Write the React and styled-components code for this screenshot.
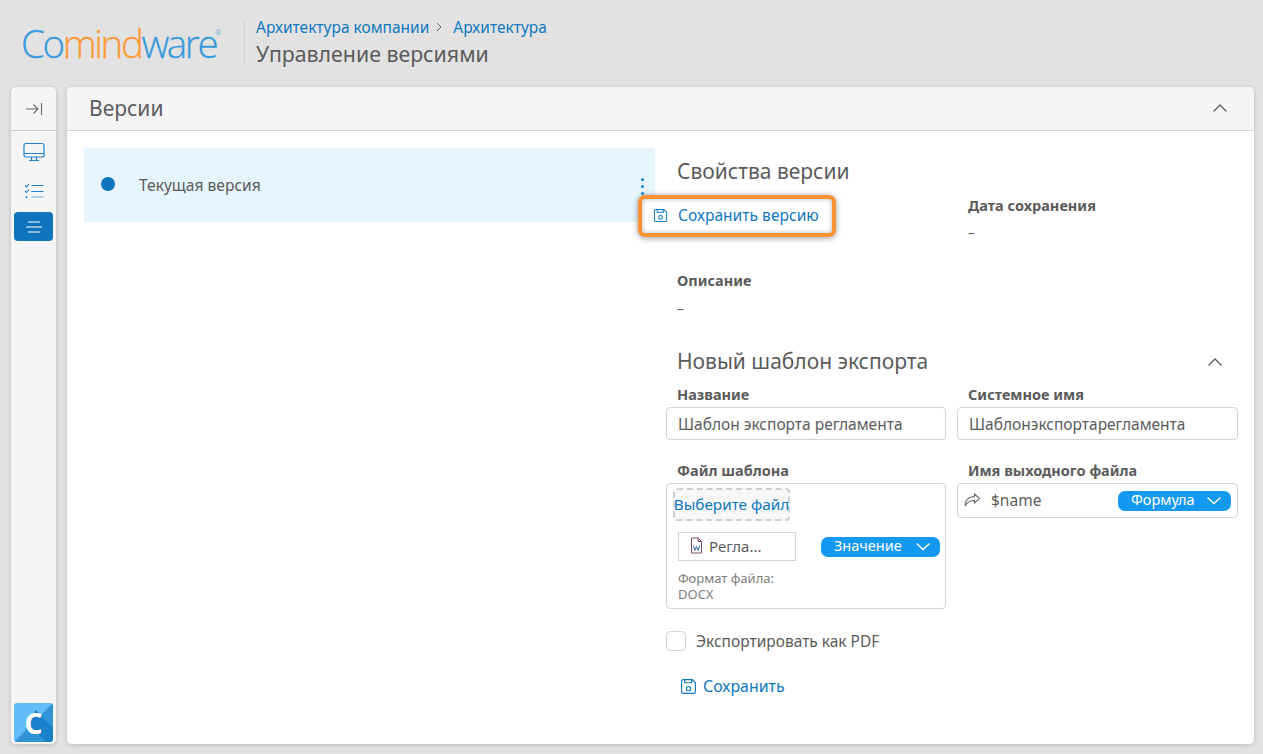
import React from 'react';
import styled, { createGlobalStyle } from 'styled-components';
import { ChevronUp } from 'lucide-react';

const Global = createGlobalStyle`
  html, body { margin: 0; padding: 0; height: 100%; background: #e2e2e2; }
  body { font-family: "Noto Sans", "Open Sans", sans-serif; color: #5b5b5b; overflow: hidden; }
  * { box-sizing: border-box; }
`;

const Page = styled.div`
  width: 1263px; height: 754px; display: flex; flex-direction: column; background: #e2e2e2;
`;
const Header = styled.header`
  height: 87px; display: flex; align-items: flex-start; padding: 21px 0 0 21px; flex: none;
`;
const Logo = styled.div`
  width: 201px; height: 44px; margin-right: 22px; display: flex; align-items: baseline;
  font-family: "Open Sans", sans-serif; font-size: 38.5px; font-weight: 300; letter-spacing: -2.4px; line-height: 44px;
  color: #3a9bdc; position: relative; -webkit-text-stroke: 0.3px currentColor;
`;
const LogoOrange = styled.span` color: #fd9a3c; `;
const Reg = styled.span`
  font-size: 8px; letter-spacing: 0; color: #3a9bdc; position: absolute; left: 194px; top: 6px; line-height: 10px; -webkit-text-stroke: 0;
`;
const HeaderText = styled.div`
  border-left: 1px solid #d2d2d2; height: 44px; padding-left: 11px; display: flex; flex-direction: column;
`;
const Crumbs = styled.div`
  display: flex; align-items: center; font-size: 15.5px; line-height: 14px; color: #0f78bf; margin-top: -1px;
`;
const CrumbSep = styled.svg` width: 10px; height: 10px; margin: 0 9px 0 5px; `;
const PageTitle = styled.div` font-size: 21.3px; line-height: 27px; margin-top: 6px; color: #5b5b5b; `;

const Body = styled.div` display: flex; gap: 11px; padding: 0 9px 10px 11px; flex: 1; min-height: 0; `;
const Rail = styled.nav`
  width: 45px; background: #f5f5f5; border-radius: 5px; box-shadow: 0 1px 4px rgba(0,0,0,.18);
  display: flex; flex-direction: column; align-items: center;
`;
const RailTop = styled.div`
  width: 100%; height: 44px; border-bottom: 1px solid #cfcfcf; display: flex; align-items: center; justify-content: center;
  margin-bottom: 6px; padding-top: 1px;
`;
const RailItem = styled.div`
  width: 39px; height: 29px; margin-bottom: ${p => p.$mb}px; padding-bottom: ${p => p.$pb || 0}px; border-radius: 4px; display: flex; align-items: center; justify-content: center;
  background: ${p => p.$active ? '#0f74bb' : 'transparent'};
`;
const RailSpacer = styled.div` flex: 1; `;
const BrandTile = styled.div`
  width: 39px; height: 39px; margin-bottom: 2px; border-radius: 3px; overflow: hidden; position: relative;
  background: #63bcf8;
`;
const BrandLetter = styled.span`
  position: absolute; inset: 0; display: flex; align-items: center; justify-content: center;
  color: #fff; font-size: 28px; font-weight: 700; font-family: "Noto Sans", sans-serif; line-height: 1;
`;
const BrandArt = styled.svg` position: absolute; inset: 0; width: 39px; height: 39px; `;

const Card = styled.main`
  flex: 1; background: #fff; border-radius: 5px; box-shadow: 0 1px 4px rgba(0,0,0,.18);
  display: flex; flex-direction: column; overflow: hidden; min-width: 0;
`;
const CardHead = styled.div`
  height: 44px; background: #f5f5f5; border-bottom: 1px solid #d4d4d4; display: flex; align-items: center; justify-content: space-between;
  padding: 0 22px 2px 22px; font-size: 21px; color: #5b5b5b; flex: none;
`;
const CardBody = styled.div` display: flex; flex: 1; padding: 17px 16px 0 17px; position: relative; min-height: 0; `;
const Left = styled.div` width: 571px; flex: none; `;
const VersionRow = styled.div`
  height: 74px; background: #e6f5fe; display: flex; align-items: center; padding: 0 0 0 17px; position: relative;
`;
const Dot = styled.span` width: 14px; height: 14px; border-radius: 50%; background: #0f74bb; margin-right: 24px; margin-top: -2px; `;
const VersionName = styled.span` font-size: 15.6px; line-height: 20px; margin-top: -1px; `;
const Kebab = styled.div`
  position: absolute; right: 11px; top: 30px; display: flex; flex-direction: column; gap: 4px;
`;
const KebabDot = styled.i` width: 3px; height: 3px; border-radius: 50%; background: #1488d8; display: block; `;
const SaveMenu = styled.div`
  position: absolute; left: 571px; top: 64px; width: 198px; height: 42px; background: #fff;
  border: 4px solid #fb9234; border-radius: 7px; box-shadow: 0 1px 6px rgba(0,0,0,.4), inset 0 0 5px rgba(0,0,0,.28);
  display: flex; align-items: center; gap: 10px; padding-left: 11px; color: #0f78bf; font-size: 15.6px; z-index: 2; padding-bottom: 2px;
`;

const Right = styled.div` margin-left: 11px; width: 572px; flex: none; padding-top: 10px; `;
const SectionHead = styled.div`
  font-size: 21px; line-height: 27px; padding-left: 11px; color: #5b5b5b; display: flex; justify-content: space-between; align-items: center;
  padding-right: 11px;
`;
const Props = styled.div` display: grid; grid-template-columns: 291px 1fr; grid-auto-rows: 75px; padding-left: 11px; margin-top: 11px; height: 152px; `;
const PropCell = styled.div``;
const Caption = styled.div` font-size: 14.5px; font-weight: 700; line-height: 19px; color: #5b5b5b; `;
const Dash = styled.div` font-size: 14px; line-height: 20px; margin-top: ${p => p.$mt || 8}px; color: #6a6a6a; `;
const FormGrid = styled.div` display: grid; grid-template-columns: 280px 281px; column-gap: 11px; margin-top: 10px; `;
const Field = styled.div` display: flex; flex-direction: column; margin-bottom: ${p => p.$mb || 0}px; `;
const FieldLabel = styled(Caption)` padding-left: 11px; height: ${p => p.$h}px; line-height: ${p => p.$lh}px; `;
const TextInput = styled.div`
  height: 33px; border: 1px solid #d4d4d4; border-radius: 4px; display: flex; align-items: center; padding-left: 11px;
  font-size: 15.5px; color: #5b5b5b;
`;
const FileBox = styled.div`
  height: 126px; border: 1px solid #d4d4d4; border-radius: 4px; padding: 4px 5px 0 7px; position: relative;
`;
const PickFile = styled.div`
  width: 117px; height: 33px; background: #f7f7f7; border: 2px dashed #cfcfcf; border-radius: 4px; display: flex; align-items: center; justify-content: center;
  color: #0f78bf; font-size: 15.3px; white-space: nowrap; margin-left: -1px; padding-bottom: 2px;
`;
const FileRow = styled.div` display: flex; align-items: center; justify-content: space-between; margin: 11px 0 0 4px; `;
const FileChip = styled.div`
  width: 118px; height: 29px; border: 1px solid #d4d4d4; display: flex; align-items: center; padding: 0 0 2px 11px; gap: 6px; font-size: 15px; color: #5b5b5b;
`;
const Pill = styled.div`
  height: 20px; width: ${p => p.$w}px; background: #1499f2; color: #fff; border-radius: 7px; display: flex; align-items: center; justify-content: space-between;
  padding: 0 9px 3px 13px; font-size: 14.5px; line-height: 17px;
`;
const PillChevron = styled.svg` width: 16px; height: 9px; margin-top: 3px; `;
const Hint = styled.div` font-size: 13px; line-height: 16px; color: #7d7d7d; margin: 9px 0 0 4px; `;
const FormulaInput = styled(TextInput)` height: 35px; padding: 0 6px; justify-content: space-between; `;
const FormulaLeft = styled.div` display: flex; align-items: center; gap: 10px; padding-bottom: 2px; `;
const Check = styled.label`
  display: flex; align-items: center; gap: 10px; font-size: 15.5px; margin-top: 22px; height: 20px;
`;
const CheckBox = styled.span` width: 20px; height: 20px; border: 1px solid #d4d4d4; border-radius: 4px; background: #fff; `;
const SaveBtn = styled.div`
  display: flex; align-items: center; gap: 6px; margin: 25px 0 0 14px; color: #0f78bf; font-size: 15.9px; height: 20px;
`;

const SaveIcon = ({ size = 16, color = '#0f78bf' }) => (
  <svg width={size} height={size} viewBox="0 0 16 16" fill="none" stroke={color} strokeWidth="1.1">
    <path d="M3 1.5h8.5L14.5 4.5V13a1.5 1.5 0 0 1-1.5 1.5H3A1.5 1.5 0 0 1 1.5 13V3A1.5 1.5 0 0 1 3 1.5z" />
    <path d="M4.5 1.5v3h6.5v-3" />
    <circle cx="8" cy="10" r="2" />
  </svg>
);

const Chevron = () => (
  <PillChevron viewBox="0 0 16 9" fill="none" stroke="#fff" strokeWidth="1.4"><path d="M1.5 1.5L8 7.5l6.5-6" /></PillChevron>
);

const Breadcrumb = () => (
  <Crumbs>
    <span>Архитектура компании</span>
    <CrumbSep viewBox="0 0 10 10" fill="none" stroke="#666" strokeWidth="1"><path d="M3 1l4 4-4 4" /></CrumbSep>
    <span>Архитектура</span>
  </Crumbs>
);

export default function App() {
  return (
    <Page>
      <Global />
      <Header>
        <Logo>
          Co<LogoOrange>mind</LogoOrange>ware<Reg>®</Reg>
        </Logo>
        <HeaderText>
          <Breadcrumb />
          <PageTitle>Управление версиями</PageTitle>
        </HeaderText>
      </Header>
      <Body>
        <Rail>
          <RailTop>
            <svg width="18" height="14" viewBox="0 0 18 14" fill="none" stroke="#6a6a6a" strokeWidth="1.1">
              <path d="M1 7h12M8.5 2.5L13 7l-4.5 4.5M16.5 1v12" />
            </svg>
          </RailTop>
          <RailItem $mb={11}>
            <svg width="22" height="20" viewBox="0 0 22 20" fill="none" stroke="#1f80d0" strokeWidth="1.2">
              <rect x="1" y="1.5" width="20" height="13.5" rx="2" />
              <path d="M1 11.5h20M8.5 15v3M13.5 15v3M6 18.5h10" />
            </svg>
          </RailItem>
          <RailItem $mb={6} $pb={2}>
            <svg width="20" height="16" viewBox="0 0 20 16" fill="none" stroke="#1f80d0" strokeWidth="1.1">
              <path d="M1 2.5l1.5 1.5L5 1M1 8l1.5 1.5L5 6.5" />
              <circle cx="2.5" cy="14" r="1" fill="#1f80d0" stroke="none" />
              <path d="M7.5 2.5h12M7.5 8.5h12" />
              <path d="M7.5 14h12" stroke="#7fb3de" />
            </svg>
          </RailItem>
          <RailItem $active $mb={0}>
            <svg width="16" height="12" viewBox="0 0 16 12" fill="none" stroke="#fff" strokeWidth="1.1">
              <path d="M2 1h12M0 6h16M2 11h12" />
            </svg>
          </RailItem>
          <RailSpacer />
          <BrandTile>
            <BrandArt viewBox="0 0 39 39">
              <path d="M22 7 39 24V39H24L12 27z" fill="#1a80cb" />
              <path d="M27 12 39 0V24z" fill="#2f93d6" />
              <path d="M0 39 16 23 32 39z" fill="#2f93d6" />
            </BrandArt>
            <BrandLetter>C</BrandLetter>
          </BrandTile>
        </Rail>
        <Card>
          <CardHead>
            <span>Версии</span>
            <ChevronUp size={24} strokeWidth={1.4} color="#5b5b5b" />
          </CardHead>
          <CardBody>
            <Left>
              <VersionRow>
                <Dot />
                <VersionName>Текущая версия</VersionName>
                <Kebab><KebabDot /><KebabDot /><KebabDot /></Kebab>
              </VersionRow>
            </Left>
            <SaveMenu>
              <SaveIcon size={15} />
              <span>Сохранить версию</span>
            </SaveMenu>
            <Right>
              <SectionHead>Свойства версии</SectionHead>
              <Props>
                <PropCell />
                <PropCell>
                  <Caption>Дата сохранения</Caption>
                  <Dash>–</Dash>
                </PropCell>
                <PropCell>
                  <Caption>Описание</Caption>
                  <Dash $mt={9}>–</Dash>
                </PropCell>
              </Props>
              <SectionHead>Новый шаблон экспорта<ChevronUp size={24} strokeWidth={1.4} color="#5b5b5b" /></SectionHead>
              <FormGrid>
                <Field $mb={20}>
                  <FieldLabel $h={22} $lh={18}>Название</FieldLabel>
                  <TextInput>Шаблон экспорта регламента</TextInput>
                </Field>
                <Field $mb={20}>
                  <FieldLabel $h={22} $lh={18}>Системное имя</FieldLabel>
                  <TextInput>Шаблонэкспортарегламента</TextInput>
                </Field>
                <Field>
                  <FieldLabel $h={23} $lh={20}>Файл шаблона</FieldLabel>
                  <FileBox>
                    <PickFile>Выберите файл</PickFile>
                    <FileRow>
                      <FileChip>
                        <svg width="13" height="17" viewBox="0 0 13 17" fill="none" stroke="#7a4a6a" strokeWidth="1">
                          <path d="M1.5 1h6.5l3.5 3.5V16h-10zM8 1v3.5h3.5" />
                          <path d="M3.5 8.5l1.3 5 1.7-4 1.7 4 1.3-5" stroke="#3a6aa8" />
                        </svg>
                        <span>Регла...</span>
                      </FileChip>
                      <Pill $w={119}>Значение<Chevron /></Pill>
                    </FileRow>
                    <Hint>Формат файла:<br />DOCX</Hint>
                  </FileBox>
                </Field>
                <Field>
                  <FieldLabel $h={23} $lh={20}>Имя выходного файла</FieldLabel>
                  <FormulaInput>
                    <FormulaLeft>
                      <svg width="17" height="14" viewBox="0 0 17 14" fill="none" stroke="#6a6a6a" strokeWidth="1.1">
                        <path d="M10.5 1l5 4.5-5 4.5V7.5C6 7.5 3 9 1 13c0-5 3-9.5 9.5-9.5z" />
                      </svg>
                      <span>$name</span>
                    </FormulaLeft>
                    <Pill $w={113}>Формула<Chevron /></Pill>
                  </FormulaInput>
                </Field>
              </FormGrid>
              <Check>
                <CheckBox />
                <span>Экспортировать как PDF</span>
              </Check>
              <SaveBtn>
                <SaveIcon size={17} />
                <span>Сохранить</span>
              </SaveBtn>
            </Right>
          </CardBody>
        </Card>
      </Body>
    </Page>
  );
}
